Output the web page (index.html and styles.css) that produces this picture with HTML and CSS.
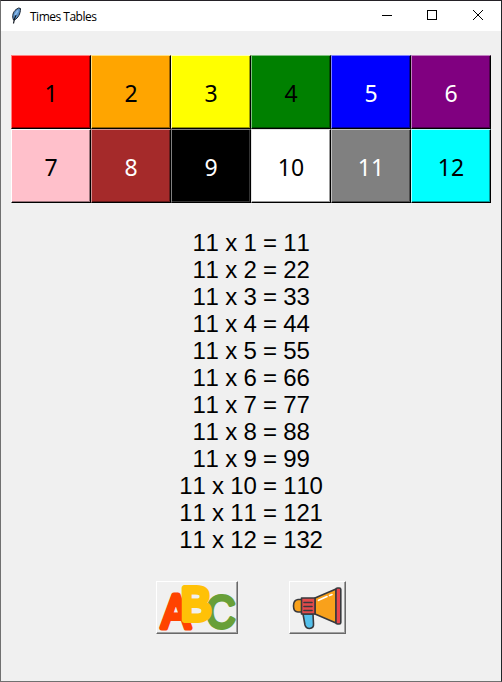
FILE: index.html
```
<!DOCTYPE html>
<html lang="en">
<head>
<meta charset="utf-8">
<title>Times Tables</title>
<link rel="stylesheet" href="styles.css">
</head>
<body>
<div class="window">
  <header class="titlebar">
    <svg class="feather" width="12" height="18" viewBox="0 0 12 18">
      <path d="M2.500 13C.8 9 2 5 5 2.500Q8 0 9.500 1.500C9.500 7 7 11 3.500 13Z" fill="#5c91c8" stroke="#17212e" stroke-width="1"/>
      <path d="M2.500 16.500C3 13 4 10 5 8" fill="none" stroke="#111820" stroke-width="1.200"/>
      <path d="M4 8L7 3.500" stroke="#8fbdea" stroke-width="1.500"/>
    </svg>
    <span class="title">Times Tables</span>
    <svg class="controls" width="106" height="12" viewBox="0 0 106 12" fill="none" stroke="#000">
      <path d="M0 6.500H10M45.500 1.500H54.500V10.500H45.500Z" shape-rendering="crispEdges"/>
      <path d="M91 1L101 11M101 1L91 11"/>
    </svg>
  </header>
  <main>
    <div class="grid">
      <button class="red">1</button><button class="orange">2</button><button class="yellow">3</button><button class="green">4</button><button class="blue">5</button><button class="purple">6</button>
      <button class="pink">7</button><button class="brown">8</button><button class="black">9</button><button class="white">10</button><button class="gray">11</button><button class="cyan">12</button>
    </div>
    <div class="table">
      <div>11 x 1 = 11</div>
      <div>11 x 2 = 22</div>
      <div>11 x 3 = 33</div>
      <div>11 x 4 = 44</div>
      <div>11 x 5 = 55</div>
      <div>11 x 6 = 66</div>
      <div>11 x 7 = 77</div>
      <div>11 x 8 = 88</div>
      <div>11 x 9 = 99</div>
      <div>11 x 10 = 110</div>
      <div>11 x 11 = 121</div>
      <div>11 x 12 = 132</div>
    </div>
    <div class="actions">
      <button class="tool abc">
        <svg width="78" height="50" viewBox="0 0 78 50" class="letters">
          <text transform="translate(3.600 45) scale(.9 1)" font-size="48" fill="#ff4300" stroke="#ff4300" stroke-width="5.200">A</text>
          <text transform="translate(48 44.500) scale(.87 1)" font-size="47" fill="#689f38" stroke="#689f38" stroke-width="4">C</text>
          <text transform="translate(23 37) scale(.96 1)" font-size="47" fill="#ffc107" stroke="#ffc107" stroke-width="6">B</text>
        </svg>
      </button>
      <button class="tool horn">
        <svg width="53" height="49" viewBox="0 0 53 49" stroke="#38393d" stroke-width="1.600" stroke-linejoin="round" stroke-linecap="round">
          <path d="M12 31L14 42Q15 45.500 18.500 45.500Q23 45 22.500 41L22 31Z" fill="#54c0eb"/>
          <path d="M11 16.500H7Q2.500 17 2.500 23Q2.500 29 7 29H11Z" fill="#f9a11b"/>
          <path d="M24 15L45 6V40L24 31Z" fill="#f9a11b"/>
          <rect x="10.500" y="15" width="13.500" height="16" fill="#e34b4b"/>
          <rect x="45" y="5" width="4.800" height="36" rx="1.500" fill="#e8464d"/>
          <path d="M13 19.500H21M13 23.500H21M13 27.500H21"/>
          <path d="M27.500 17.300L36 13.500M38.500 12.500L41 11.500" stroke="#fff"/>
        </svg>
      </button>
    </div>
  </main>
</div>
</body>
</html>
```
FILE: styles.css
```
* { box-sizing: border-box; }
body { margin: 0; background: #f0f0f0; }
.window {
  width: 502px;
  height: 682px;
  border: 1px solid #707070;
  border-top-color: #242126;
  border-right-color: #202529;
  background: #f0f0f0;
  overflow: hidden;
}
.titlebar {
  display: flex;
  align-items: center;
  height: 30px;
  padding-left: 10px;
  background: #fff;
  color: #000;
}
.feather { margin-top: -1px; }
.title {
  margin-left: 7px;
  font: 12px "Open Sans", "Noto Sans", sans-serif;
  letter-spacing: -.5px;
}
.controls { margin-left: auto; margin-right: 13px; margin-top: -2px; }
.grid {
  display: grid;
  grid-template-columns: repeat(6, 80px);
  grid-auto-rows: 74px;
  margin: 24px 0 0 10px;
}
.grid button {
  margin: 0;
  padding: 2px 0 0;
  border: 1px solid #000;
  border-top-color: var(--light);
  border-left-color: var(--light);
  box-shadow: inset -1px -1px var(--dark);
  color: #000;
  font: 23px "Noto Sans", sans-serif;
}
.red { background: #f00; --light: #ff8080; --dark: #990000; }
.orange { background: #ffa500; --light: #ffe080; --dark: #996300; }
.yellow { background: #ff0; --light: #ffffb0; --dark: #999900; }
.green { background: #008000; --light: #80c080; --dark: #004d00; }
.grid .blue { background: #00f; --light: #8080ff; --dark: #000099; color: #fff; }
.grid .purple { background: #800080; --light: #c080c0; --dark: #4d004d; color: #fff; }
.pink { background: #ffc0cb; --light: #fff; --dark: #99737a; }
.grid .brown { background: #a52a2a; --light: #d29494; --dark: #631919; color: #fff; }
.grid .black { background: #000; --light: #808080; --dark: #333; color: #fff; }
.white { background: #fff; --light: #e5e5e5; --dark: #999; }
.grid .gray { background: #808080; --light: #c0c0c0; --dark: #4d4d4d; color: #fff; }
.cyan { background: #0ff; --light: #b0ffff; --dark: #009999; }
.table {
  margin-top: 26px;
  text-align: center;
  font: 24px/27px "Liberation Sans", Arial, sans-serif;
  font-kerning: none;
  letter-spacing: -.2px;
  color: #000;
}
.actions {
  display: flex;
  gap: 51px;
  margin: 28px 0 0 155px;
}
.tool {
  display: block;
  height: 53px;
  margin: 0;
  padding: 0;
  background: #f0f0f0;
  border: 1px solid #696969;
  border-top-color: #fff;
  border-left-color: #fff;
  box-shadow: inset -1px -1px #a0a0a0;
}
.tool svg { display: block; overflow: visible; }
.abc { width: 82px; padding-left: 1px; }
.horn { width: 57px; padding-left: 1px; }
.letters {
  font-family: "Liberation Sans", Arial, sans-serif;
  stroke-linejoin: round;
}
```
